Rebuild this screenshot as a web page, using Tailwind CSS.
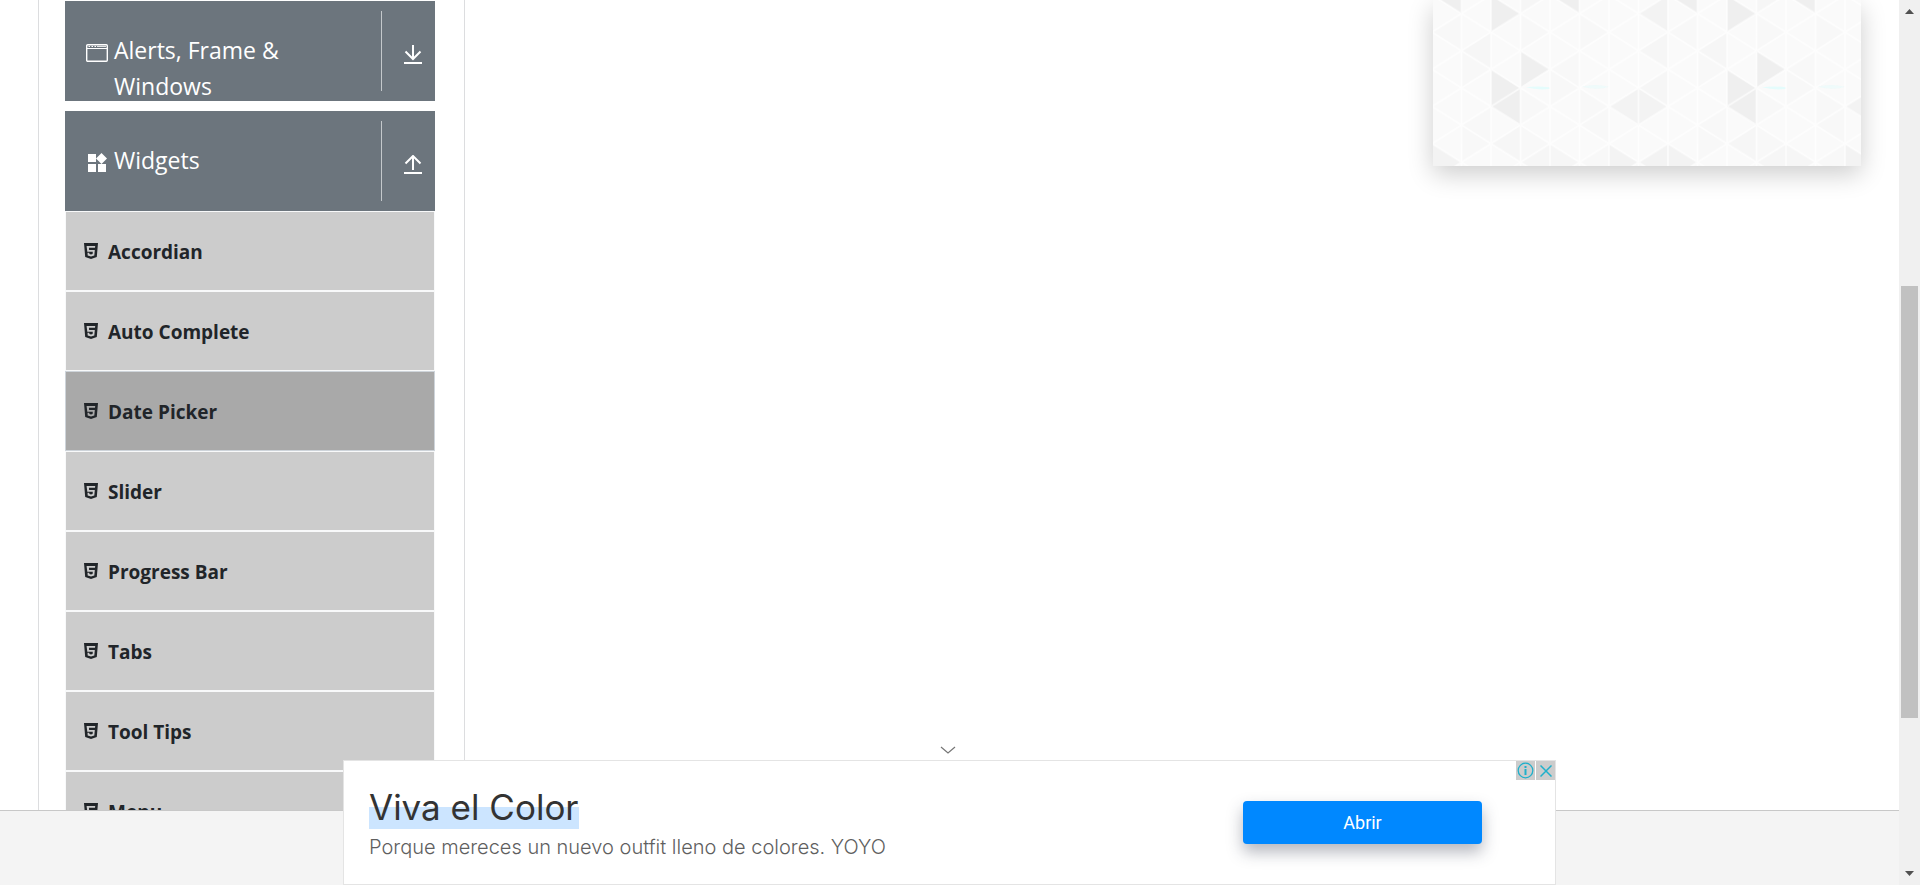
<!DOCTYPE html>
<html lang="es">
<head>
<meta charset="utf-8">
<meta name="viewport" content="width=device-width, initial-scale=1">
<title>Widgets</title>
<script src="https://cdn.jsdelivr.net/npm/@tailwindcss/browser@4"></script>
</head>
<body class="bg-white font-['Open_Sans',sans-serif] text-[#212529]">
<svg class="hidden" aria-hidden="true">
  <symbol id="html5" viewBox="0 0 14 16"><path fill="currentColor" fill-rule="evenodd" d="M0 0h14l-1.200 14L7 16l-5.800-2zM2.600 3l.7 5.700h5.500l-.2 2.300-1.600.5-1.600-.5-.1-1.200H3.500l.2 2.600L7 13.400l3.300-1 .5-5.500H5.100L5 4.800h6l.2-1.800z"/></symbol>
</svg>
<div class="flex h-screen overflow-hidden">
  <div class="relative flex min-w-0 flex-1 flex-col">
    <main class="flex min-h-0 flex-1 overflow-hidden pl-[38px]">
      <nav class="w-[427px] shrink-0 border-x border-[#dcdddf] px-[26px] pt-px pr-[29px]">
        <button type="button" class="flex h-[100px] w-full overflow-hidden bg-[#6c757d] text-left text-[23px] leading-9 text-white">
          <span class="flex flex-1 gap-[6px] pt-[31px] pl-[21px]">
            <svg class="mt-3 h-[18px] w-[22px] shrink-0" viewBox="0 0 22 18" fill="none" stroke="#fff"><rect x=".7" y=".7" width="20.600" height="16.600" rx="1" stroke-width="1.400"/><path d="M1 4.500h20" /><path d="M2.500 2.500h8" stroke-dasharray="1.500 1.500"/><path d="M11 2.500h9" stroke-width=".8"/></svg>
            <span class="w-[190px]">Alerts, Frame &amp; Windows</span>
          </span>
          <span class="my-[10px] flex h-20 w-[54px] justify-center border-l border-[#c4c8cb] pt-[34px] pl-[9px]">
            <svg class="h-[19px] w-[18px]" viewBox="0 0 18 19" fill="none" stroke="#fff" stroke-width="2"><path d="M9 0v14M1.500 6.500L9 14l7.500-7.500M0 18h18"/></svg>
          </span>
        </button>
        <button type="button" class="mt-[10px] flex h-[100px] w-full overflow-hidden bg-[#6c757d] text-left text-[23px] leading-9 text-white">
          <span class="flex flex-1 gap-[6px] pt-[31px] pl-[21px]">
            <svg class="mt-[11px] h-5 w-[22px] shrink-0" viewBox="0 0 22 20" fill="#fff"><path d="M2 1h8v8H2zM2 11h8v8H2zM12 11h8v8h-8zM15.500 0L21 5.500 15.500 11 10 5.500z"/></svg>
            <span>Widgets</span>
          </span>
          <span class="my-[10px] flex h-20 w-[54px] justify-center border-l border-[#c4c8cb] pt-[34px] pl-[9px]">
            <svg class="h-[19px] w-[18px]" viewBox="0 0 18 19" fill="none" stroke="#fff" stroke-width="2"><path d="M9 15V1M1.500 8.500L9 1l7.500 7.500M0 18h18"/></svg>
          </span>
        </button>
        <ul class="text-[19px] font-bold">
          <li><a href="#" class="flex h-20 items-center gap-[10px] border border-[#f8f9fa] bg-[#ccc] pt-0.5 pl-[18px]"><svg class="mb-0.5 h-4 w-[14px]"><use href="#html5"/></svg>Accordian</a></li>
          <li><a href="#" class="flex h-20 items-center gap-[10px] border border-[#f8f9fa] bg-[#ccc] pt-0.5 pl-[18px]"><svg class="mb-0.5 h-4 w-[14px]"><use href="#html5"/></svg>Auto Complete</a></li>
          <li><a href="#" class="flex h-20 items-center gap-[10px] border border-[#ced4da] bg-[#a9a9a9] pt-0.5 pl-[18px]"><svg class="mb-0.5 h-4 w-[14px]"><use href="#html5"/></svg>Date Picker</a></li>
          <li><a href="#" class="flex h-20 items-center gap-[10px] border border-[#f8f9fa] bg-[#ccc] pt-0.5 pl-[18px]"><svg class="mb-0.5 h-4 w-[14px]"><use href="#html5"/></svg>Slider</a></li>
          <li><a href="#" class="flex h-20 items-center gap-[10px] border border-[#f8f9fa] bg-[#ccc] pt-0.5 pl-[18px]"><svg class="mb-0.5 h-4 w-[14px]"><use href="#html5"/></svg>Progress Bar</a></li>
          <li><a href="#" class="flex h-20 items-center gap-[10px] border border-[#f8f9fa] bg-[#ccc] pt-0.5 pl-[18px]"><svg class="mb-0.5 h-4 w-[14px]"><use href="#html5"/></svg>Tabs</a></li>
          <li><a href="#" class="flex h-20 items-center gap-[10px] border border-[#f8f9fa] bg-[#ccc] pt-0.5 pl-[18px]"><svg class="mb-0.5 h-4 w-[14px]"><use href="#html5"/></svg>Tool Tips</a></li>
          <li><a href="#" class="flex h-20 items-center gap-[10px] border border-[#f8f9fa] bg-[#ccc] pt-0.5 pl-[18px]"><svg class="mb-0.5 h-4 w-[14px]"><use href="#html5"/></svg>Menu</a></li>
        </ul>
      </nav>
      <aside class="mr-[38px] ml-auto h-[166px] w-[428px] shrink-0 shadow-[0_8px_24px_rgba(0,0,0,0.2)]">
        <svg class="block size-full" viewBox="39 0 1284 498" preserveAspectRatio="xMinYMax slice">
          <defs>
            <pattern id="grid" x="36" y="-15" width="177" height="111.500" patternUnits="userSpaceOnUse">
              <path d="M0 0v112M88.500 0v112M177 0v112M0 0l177 111.500M0 111.500L177 0" fill="none" stroke="#fff" stroke-width="5"/>
            </pattern>
            <g id="tiles">
              <path fill="#efefef" d="M213 208l89 57-89 55zM213 320l89-55v112zM302 153l88 55-88 57zM213-15l89 56-89 56zM36-15l89 56V-70zM390-15l88 56V-70z"/>
              <path fill="#f3f3f3" d="M655 41l88-56V97zM566 320l89-55v112zM655 265l88 55-88 57zM566 431l89 56-89 56zM36 431l89 56-89 56zM655 487l88-56v112z"/>
              <path fill="#f6f6f6" d="M125 153l88-56v111zM655 153l88-56v111zM655 265l88-57v112zM213 431l89-56v112zM302-70l88 55-88 56zM390 431l88 56-88 56zM302 487l88-56v112z"/>
              <path fill="#f8f8f8" d="M125 153l88 55-88 57zM302 41l88 56-88 56zM478 41l88 56-88 56zM390 208l88-55v112zM302 376l88 55-88 56zM125 376l88 55-88 56zM478 265l88 55-88 57zM36 97l89-56v112zM302 265l88 55-88 57zM125 376l88-56v111zM478 487l88-56v112zM478 376l88-56v111zM390 208l88 57-88 55z"/>
            </g>
            <g id="spots" fill="#e4fcfc"><path d="M318 262q35-5 70 0v5q-35 4-70-5z"/><path opacity=".5" d="M485 260q40-10 82 0-32 12-82 0z"/></g>
          </defs>
          <rect x="39" width="1284" height="498" fill="#fafafa"/>
          <use href="#tiles"/><use href="#tiles" x="708"/>
          <rect x="39" width="1284" height="498" fill="url(#grid)" opacity=".7"/>
          <use href="#spots"/><use href="#spots" x="708"/>
        </svg>
      </aside>
    </main>
    <footer class="h-[75px] shrink-0 border-t border-[#c8c8c8] bg-[#f4f4f4]"></footer>

    <section class="absolute inset-x-0 bottom-0 mx-auto w-[1213px] max-w-full" aria-label="Anuncio">
      <button type="button" aria-label="Ocultar" class="mx-auto flex h-5 w-8 items-center justify-center pr-1">
        <svg class="h-2 w-4" viewBox="0 0 16 8" fill="none" stroke="#757575" stroke-width="1.200"><path d="M1 1l7 6 7-6"/></svg>
      </button>
      <div class="relative flex h-[125px] items-center justify-between border border-[#e4e4e4] bg-white pr-[73px] pl-[25px]">
        <div class="pt-1 font-['Inter',sans-serif]">
          <h2 class="w-fit bg-linear-to-b from-transparent from-50% to-[#cce5ff] to-50% text-[35px] leading-[44px] text-[#333]">Viva el Color</h2>
          <p class="text-xl leading-9 font-light text-[#5f5f5f]">Porque mereces un nuevo outfit lleno de colores. YOYO</p>
        </div>
        <button type="button" class="h-[43px] w-[239px] rounded bg-[#08f] font-['Roboto',sans-serif] text-lg text-white shadow-[0_8px_16px_rgba(40,45,70,0.35)]">Abrir</button>
        <div class="absolute top-0 right-0 flex gap-px">
          <button type="button" aria-label="Información" class="flex size-[19px] items-center justify-center bg-[#ccc]"><svg class="size-[17px]" viewBox="0 0 17 17" fill="none" stroke="#1fb0cb"><circle cx="8.500" cy="8.500" r="7.300" stroke-width="1.300"/><path d="M8.500 7v6M8.500 4v2" stroke-width="2"/></svg></button>
          <button type="button" aria-label="Cerrar" class="flex size-[19px] items-center justify-center bg-[#ccc]"><svg class="size-3" viewBox="0 0 12 12" stroke="#1fb0cb" stroke-width="1.500"><path d="M.5.5l11 11M11.500.5l-11 11"/></svg></button>
        </div>
      </div>
    </section>
  </div>
  <div class="flex w-[21px] shrink-0 flex-col items-center bg-[#f0f0f0] py-[9px]" aria-hidden="true">
    <svg class="h-[5px] w-[9px]" viewBox="0 0 9 5" fill="#505050"><path d="M4.500 0L9 5H0z"/></svg>
    <div class="flex w-[17px] flex-1 flex-col">
      <div class="flex-[272]"></div>
      <div class="flex-[432] bg-[#c1c1c1]"></div>
      <div class="flex-[153]"></div>
    </div>
    <svg class="h-[5px] w-[9px]" viewBox="0 0 9 5" fill="#505050"><path d="M0 0h9L4.500 5z"/></svg>
  </div>
</div>
</body>
</html>
